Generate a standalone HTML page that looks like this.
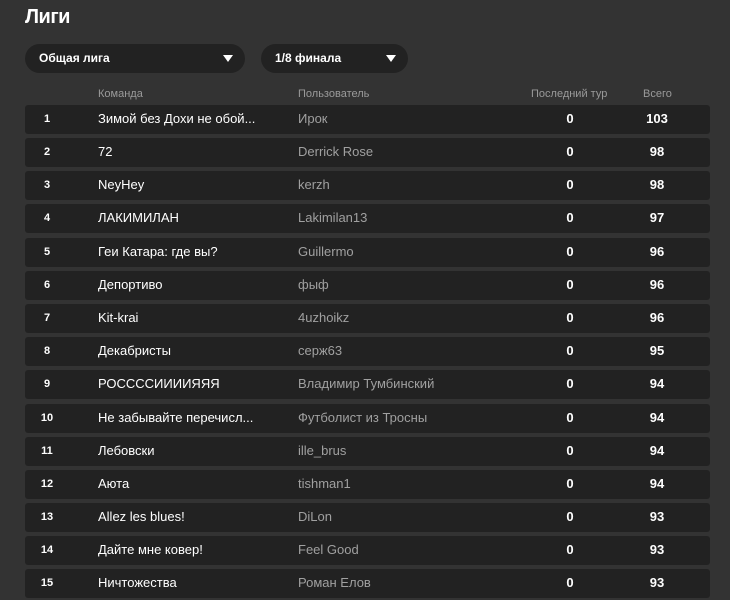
<!DOCTYPE html><html><head><meta charset="utf-8"><style>
body{margin:0;width:730px;height:600px;background:#333;font-family:"Liberation Sans",sans-serif;overflow:hidden;position:relative;color:#fff}
h1{position:absolute;left:25px;top:6px;margin:0;font-size:20px;font-weight:bold;letter-spacing:-0.5px}
.dd{position:absolute;top:44px;height:29px;background:#222;border-radius:15px;font-size:12px;font-weight:bold;line-height:29px}
.dd span{position:absolute;left:14px}
.dd i{position:absolute;right:12px;top:11px;width:0;height:0;border-left:5px solid transparent;border-right:5px solid transparent;border-top:7px solid #fff}
.hd{position:absolute;top:88px;font-size:11px;color:#9a9a9a}
.r{position:absolute;left:25px;width:685px;height:29px;background:#222;border-radius:3px;line-height:27px;font-size:13px}
.r b{position:absolute;left:12px;width:20px;text-align:center;font-size:11px;line-height:29px}
.t{position:absolute;left:73px}
.u{position:absolute;left:273px;color:#a0a0a0}
.l{position:absolute;left:530px;width:30px;text-align:center;font-weight:bold}
.s{position:absolute;left:612px;width:40px;text-align:center;font-weight:bold}
</style></head><body>
<h1>Лиги</h1>
<div class="dd" style="left:25px;width:220px"><span>Общая лига</span><i></i></div>
<div class="dd" style="left:261px;width:147px"><span>1/8 финала</span><i></i></div>
<div class="hd" style="left:98px">Команда</div>
<div class="hd" style="left:298px">Пользователь</div>
<div class="hd" style="left:531px">Последний тур</div>
<div class="hd" style="left:643px">Всего</div>
<div class="r" style="top:105px"><b>1</b><span class="t">Зимой без Дохи не обой...</span><span class="u">Ирок</span><span class="l">0</span><span class="s">103</span></div>
<div class="r" style="top:138px"><b>2</b><span class="t">72</span><span class="u">Derrick Rose</span><span class="l">0</span><span class="s">98</span></div>
<div class="r" style="top:171px"><b>3</b><span class="t">NeyHey</span><span class="u">kerzh</span><span class="l">0</span><span class="s">98</span></div>
<div class="r" style="top:204px"><b>4</b><span class="t">ЛАКИМИЛАН</span><span class="u">Lakimilan13</span><span class="l">0</span><span class="s">97</span></div>
<div class="r" style="top:238px"><b>5</b><span class="t">Геи Катара: где вы?</span><span class="u">Guillermo</span><span class="l">0</span><span class="s">96</span></div>
<div class="r" style="top:271px"><b>6</b><span class="t">Депортиво</span><span class="u">фыф</span><span class="l">0</span><span class="s">96</span></div>
<div class="r" style="top:304px"><b>7</b><span class="t">Kit-krai</span><span class="u">4uzhoikz</span><span class="l">0</span><span class="s">96</span></div>
<div class="r" style="top:337px"><b>8</b><span class="t">Декабристы</span><span class="u">серж63</span><span class="l">0</span><span class="s">95</span></div>
<div class="r" style="top:370px"><b>9</b><span class="t">РОСССCИИИИЯЯЯ</span><span class="u">Владимир Тумбинский</span><span class="l">0</span><span class="s">94</span></div>
<div class="r" style="top:404px"><b>10</b><span class="t">Не забывайте перечисл...</span><span class="u">Футболист из Тросны</span><span class="l">0</span><span class="s">94</span></div>
<div class="r" style="top:437px"><b>11</b><span class="t">Лебовски</span><span class="u">ille_brus</span><span class="l">0</span><span class="s">94</span></div>
<div class="r" style="top:470px"><b>12</b><span class="t">Аюта</span><span class="u">tishman1</span><span class="l">0</span><span class="s">94</span></div>
<div class="r" style="top:503px"><b>13</b><span class="t">Allez les blues!</span><span class="u">DiLon</span><span class="l">0</span><span class="s">93</span></div>
<div class="r" style="top:536px"><b>14</b><span class="t">Дайте мне ковер!</span><span class="u">Feel Good</span><span class="l">0</span><span class="s">93</span></div>
<div class="r" style="top:569px"><b>15</b><span class="t">Ничтожества</span><span class="u">Роман Елов</span><span class="l">0</span><span class="s">93</span></div>
</body></html>
